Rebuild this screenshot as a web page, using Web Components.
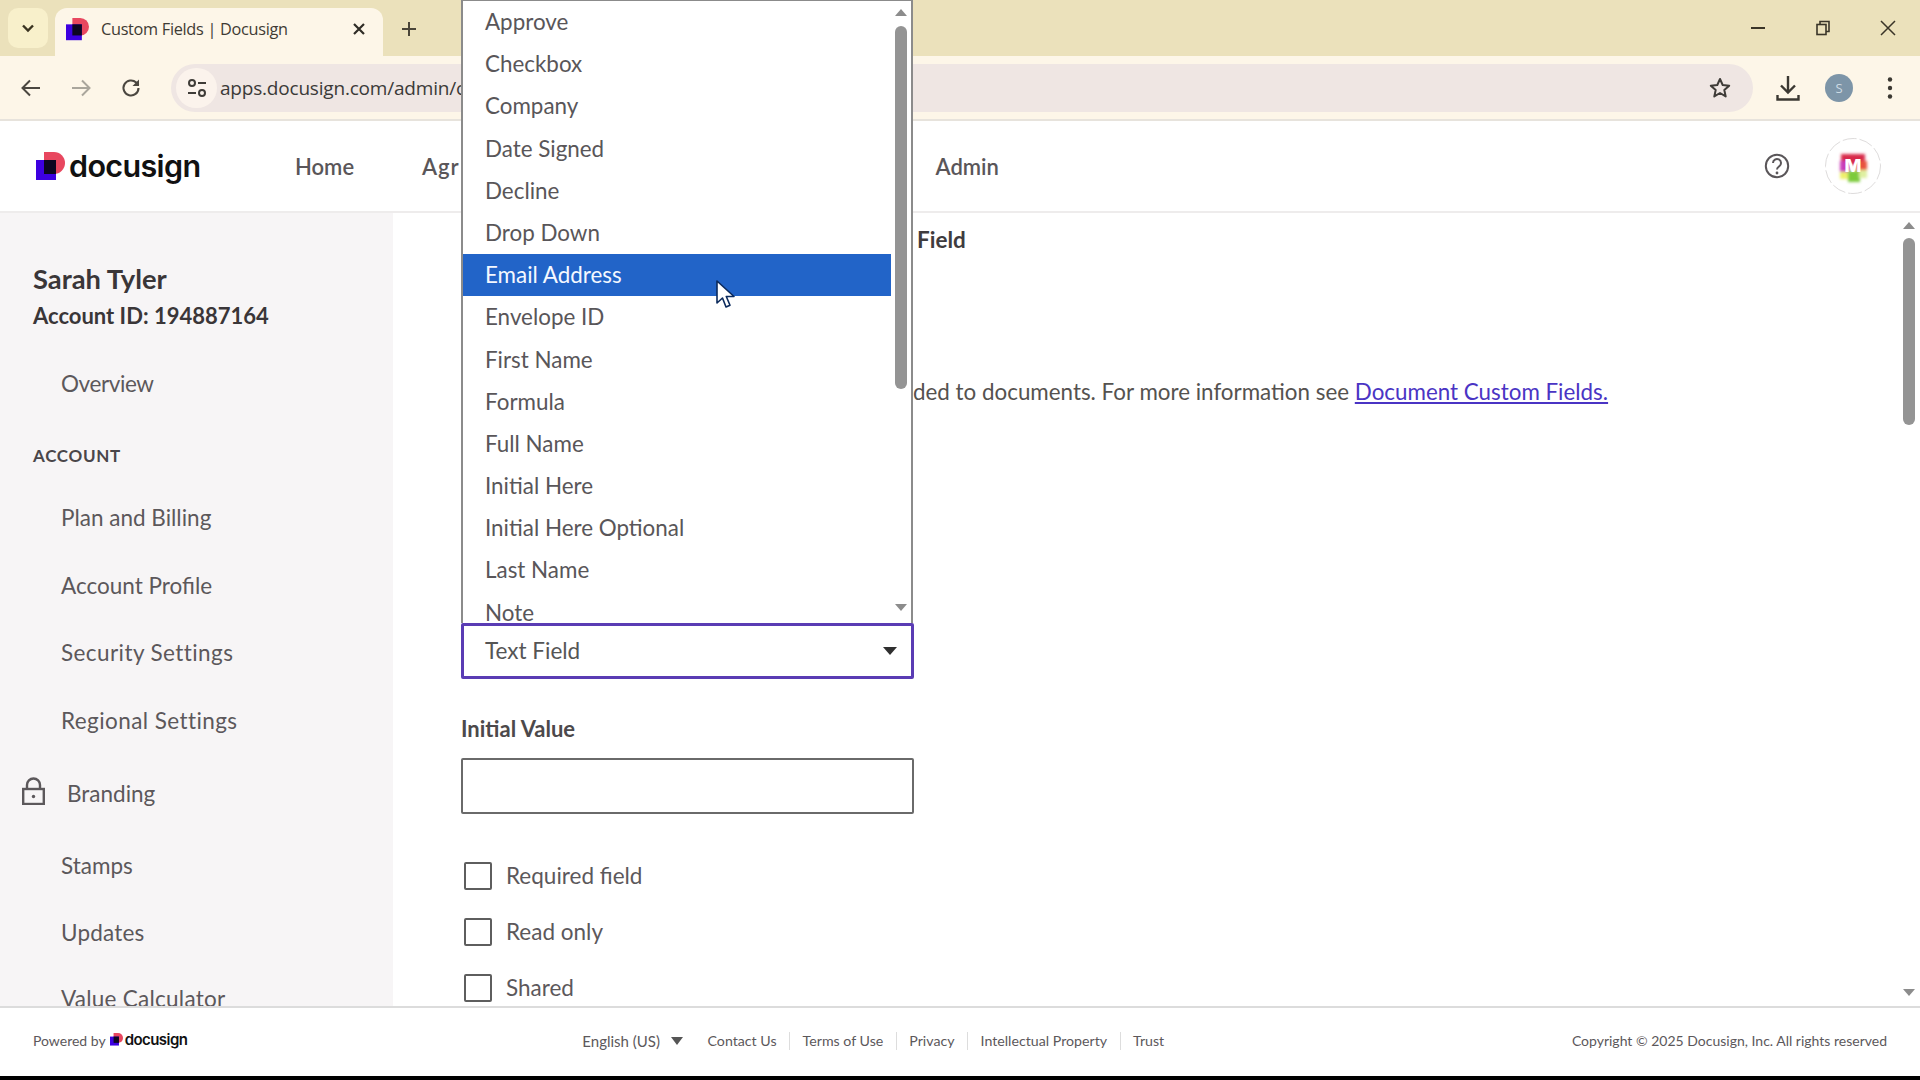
<!DOCTYPE html>
<html lang="en"><head><meta charset="utf-8"><title>Custom Fields | Docusign</title>
<style>
html,body{margin:0;padding:0;height:1080px;overflow:hidden;background:#000}
body{font-family:Lato,"Open Sans",sans-serif;color:#555}
</style></head><body>
<app-page></app-page>
<script>
const define=(name,css,html,setup)=>customElements.define(name,class extends HTMLElement{
  connectedCallback(){ if(this.shadowRoot) return;
    const r=this.attachShadow({mode:'open'});
    r.innerHTML='<style>'+css+'</style>'+(typeof html==='function'?html(this):html);
    if(setup) setup(r,this);
  }
});
const LOGO=(s)=>`<svg width="${s}" height="${s}" viewBox="0 0 29 29" style="display:block"><path d="M8 0h10a11 11 0 0 1 0 22H8z" fill="#e8475f"/><rect x="0" y="8" width="20" height="20" fill="#3d00e0"/><path d="M8 8h12v14H8z" fill="#0d0620"/></svg>`;

define('doc-logo',`:host{display:inline-flex;align-items:center;gap:var(--g,4px);font-family:Inter,Roboto,sans-serif;font-weight:600;color:#111;letter-spacing:-.04em;line-height:1}`,
 e=>LOGO(e.getAttribute('size')||29)+`<span style="font-size:${e.getAttribute('fs')||33}px">docusign</span>`);

define('tab-strip',`:host{display:flex;height:56px;background:#ebe1bb;align-items:flex-end;position:relative;flex:none}
 .btn{width:40px;height:40px;margin:0 7px 8px 8px;background:#f8f0cb;border-radius:10px;display:flex;align-items:center;justify-content:center}
 .tab{width:328px;height:48px;background:#fdf6e8;border-radius:12px 12px 0 0;display:flex;align-items:center;box-sizing:border-box;padding:0 0 6px 11px;font:16.300px "Open Sans",Roboto,sans-serif;color:#3f3b34;letter-spacing:-.3px}
 .tab .t{margin-left:12px;width:251px;white-space:nowrap}
 .plus{margin:0 0 6px 18px;height:42px;display:flex;align-items:center}
 .win{margin-left:auto;display:flex;height:56px;align-items:center;padding-right:24px;gap:49px}`,
 `<div class="btn"><svg width="16" height="16" viewBox="0 0 16 16"><path d="M3 5.500l5 5 5-5" fill="none" stroke="#3a3320" stroke-width="2.400"/></svg></div>
 <div class="tab"><svg width="23" height="23" viewBox="0 0 29 29"><path d="M8 0h10a11 11 0 0 1 0 22H8z" fill="#e8475f"/><rect x="0" y="8" width="20" height="20" fill="#3d00e0"/><path d="M8 8h12v14H8z" fill="#0d0620"/></svg>
 <span class="t">Custom Fields | Docusign</span>
 <svg width="14" height="14" viewBox="0 0 14 14"><path d="M2 2l10 10M12 2L2 12" stroke="#2f2c26" stroke-width="2.200"/></svg></div>
 <div class="plus"><svg width="16" height="16" viewBox="0 0 16 16"><path d="M8 1v14M1 8h14" stroke="#4a4538" stroke-width="2"/></svg></div>
 <div class="win">
 <svg width="16" height="16" viewBox="0 0 16 16"><path d="M1 8h14" stroke="#3a3528" stroke-width="2"/></svg>
 <svg width="16" height="16" viewBox="0 0 16 16"><rect x="2" y="4.500" width="9" height="10" fill="none" stroke="#3a3528" stroke-width="1.600"/><path d="M5 4V1.500h9v10h-3" fill="none" stroke="#3a3528" stroke-width="1.600"/></svg>
 <svg width="16" height="16" viewBox="0 0 16 16"><path d="M1 1l14 14M15 1L1 15" stroke="#3a3528" stroke-width="1.500"/></svg></div>`);

define('browser-bar',`:host{display:flex;height:65px;background:#fdf6e8;align-items:center;flex:none;box-sizing:border-box;border-bottom:2px solid #e7e3dc}
 .nav{display:flex;align-items:center;width:171px;box-sizing:border-box;padding-left:20px;gap:28px;flex:none}
 .addr{flex:none;width:1582px;height:48px;border-radius:24px;background:#efe6e3;display:flex;align-items:center;box-sizing:border-box;padding:0 21px 0 5px}
 .chip{width:41px;height:40px;border-radius:20px;background:#fbf3ec;display:flex;align-items:center;justify-content:center;margin-right:3px}
 .url{font:19px "Open Sans",Roboto,sans-serif;color:#3b3a38;letter-spacing:-.2px}
 .star{margin-left:auto}
 .tools{display:flex;align-items:center;margin-left:22px}
 .ava{width:28px;height:28px;border-radius:50%;background:#7d95a8;color:#cfdbe4;font:13px "Open Sans",sans-serif;display:flex;align-items:center;justify-content:center;margin:0 34px 0 24px}`,
 `<div class="nav">
 <svg width="22" height="22" viewBox="0 0 22 22"><path d="M20 11H3M10 3.500L2.500 11l7.500 7.500" fill="none" stroke="#4b4740" stroke-width="2"/></svg>
 <svg width="22" height="22" viewBox="0 0 22 22"><path d="M2 11h17M12 3.500l7.500 7.500-7.500 7.500" fill="none" stroke="#aaa69c" stroke-width="2"/></svg>
 <svg width="22" height="22" viewBox="0 0 22 22"><path d="M18.500 11a7.500 7.500 0 1 1-2.300-5.400L18.500 8" fill="none" stroke="#4b4740" stroke-width="2.100"/><path d="M19 2.500V9h-6.500z" fill="#4b4740"/></svg></div>
 <div class="addr"><span class="chip"><svg width="22" height="22" viewBox="0 0 22 22"><circle cx="6" cy="6" r="3" fill="none" stroke="#3f3c38" stroke-width="2"/><path d="M12 6h8M2 16h8" stroke="#3f3c38" stroke-width="2"/><circle cx="16" cy="16" r="3" fill="none" stroke="#3f3c38" stroke-width="2"/></svg></span>
 <span class="url">apps.docusign.com/admin/c</span>
 <svg class="star" width="24" height="24" viewBox="0 0 24 24"><path d="M12 3l2.700 6 6.500.7-4.900 4.300 1.400 6.400L12 17l-5.700 3.400L7.700 14 2.800 9.700 9.300 9z" fill="none" stroke="#3f3c38" stroke-width="2" stroke-linejoin="round"/></svg></div>
 <div class="tools">
 <svg width="26" height="28" viewBox="0 0 26 28"><path d="M13 2v16M6 11.500l7 7 7-7" fill="none" stroke="#3b3832" stroke-width="2.400"/><path d="M2.500 21v4.500h21V21" fill="none" stroke="#3b3832" stroke-width="2.400"/></svg>
 <span class="ava">S</span>
 <svg width="6" height="24" viewBox="0 0 6 24"><circle cx="3" cy="3.500" r="2.200" fill="#3b3832"/><circle cx="3" cy="12" r="2.200" fill="#3b3832"/><circle cx="3" cy="20.500" r="2.200" fill="#3b3832"/></svg></div>`);

define('app-header',`:host{display:flex;height:92px;background:#fff;align-items:center;flex:none;box-sizing:border-box;border-bottom:2px solid #eeecec;position:relative}
 doc-logo{margin-left:36px;width:259px;flex:none}
 a{font:600 22px Lato,sans-serif;color:#5a5659;text-decoration:none}
 .agr{margin-left:68px;letter-spacing:.9px}
 .adm{margin-left:476px}
 .help{margin-left:auto}
 .av{margin:0 38px 0 34px;width:58px;height:58px;display:block}`,
 `<doc-logo size="29" fs="30.500"></doc-logo><a>Home</a><a class="agr">Agr</a><a class="adm">Admin</a>
 <svg class="help" width="26" height="26" viewBox="0 0 26 26"><circle cx="13" cy="13" r="11.200" fill="none" stroke="#5a5659" stroke-width="2"/><path d="M9 10a4 4 0 1 1 6.200 3.300C13.800 14.300 13 15 13 16.500" fill="none" stroke="#5a5659" stroke-width="2"/><circle cx="13" cy="20" r="1.400" fill="#5a5659"/></svg>
 <svg class="av" viewBox="0 0 58 58"><defs><filter id="b" x="-30%" y="-30%" width="160%" height="160%"><feGaussianBlur stdDeviation="1.600"/></filter></defs>
 <circle cx="29" cy="29" r="27.500" fill="#fff" stroke="#dedcdc" stroke-width="1" stroke-dasharray="14 3"/>
 <g filter="url(#b)"><rect x="17" y="17" width="24" height="11" fill="#d82a4c"/><rect x="16" y="24" width="10" height="12" fill="#c93cb8"/><rect x="32" y="24" width="11" height="10" fill="#e8533c"/><rect x="16" y="35" width="10" height="7" fill="#eef06a"/><rect x="24" y="34" width="12" height="11" fill="#7ccb3a"/><rect x="35" y="33" width="8" height="8" fill="#dff0a0"/></g>
 <text x="29" y="35" text-anchor="middle" font-family="Inter,sans-serif" font-weight="800" font-size="18" fill="#fff">M</text></svg>`);

define('side-link',`:host{display:block;height:67.400px;padding-left:61px;font:400 22.500px/67.400px Lato,sans-serif;color:#5c585b;white-space:nowrap}`,`<slot></slot>`);

define('lock-link',`:host{display:flex;align-items:center;height:67.400px;padding-left:22px;font:400 22.500px Lato,sans-serif;color:#5c585b}
 svg{margin-right:22px;margin-top:-6px}`,
 `<svg width="23" height="28" viewBox="0 0 23 28"><path d="M5 12V8a6.500 6.500 0 0 1 13 0v4" fill="none" stroke="#5c585b" stroke-width="2.400"/><rect x="1.200" y="12" width="20.600" height="15" fill="none" stroke="#5c585b" stroke-width="2.400"/><circle cx="11.500" cy="19.500" r="1.700" fill="#5c585b"/></svg><slot></slot>`);

define('side-nav',`:host{display:block;width:393px;flex:none;background:#f7f5f6;overflow:hidden;box-sizing:border-box;padding-top:50px}
 .n{font:700 27.300px/32px Lato,sans-serif;color:#3a3638;padding-left:33px}
 .a{font:700 22px/30px Lato,sans-serif;color:#3a3638;padding-left:33px;margin:6px 0 18.500px}
 .h{font:700 17px/24px Lato,sans-serif;letter-spacing:.7px;color:#4a4649;padding-left:33px;margin:27.500px 0 16px}
 .mb{margin-top:6.300px}.ms{margin-top:4px}
 .wide{letter-spacing:.42px}.narrow{letter-spacing:-.4px}`,
 `<div class="n">Sarah Tyler</div><div class="a">Account ID: 194887164</div>
 <side-link class="narrow">Overview</side-link><div class="h">ACCOUNT</div>
 <side-link>Plan and Billing</side-link><side-link>Account Profile</side-link><side-link class="wide">Security Settings</side-link><side-link class="wide">Regional Settings</side-link>
 <lock-link class="mb">Branding</lock-link><side-link class="ms">Stamps</side-link><side-link style="letter-spacing:.2px">Updates</side-link><side-link style="margin-top:-1px;letter-spacing:.25px">Value Calculator</side-link>`);

define('check-row',`:host{display:flex;align-items:center;height:28px;margin:0 0 28px 3px;font:22.500px Lato,sans-serif;color:#5c585b;gap:14px}
 i{display:block;width:28px;height:28px;box-sizing:border-box;border:2.500px solid #5e5e5e;border-radius:2px;background:#fff}`,`<i></i><slot></slot>`);

define('type-select',`:host{display:flex;align-items:center;justify-content:space-between;width:453px;height:56px;box-sizing:border-box;border:3px solid #5a3cb4;border-radius:2px;padding:0 14px 2px 21px;font:22.500px Lato,sans-serif;color:#555;background:#fff}
 i{display:block;width:0;height:0;border:7px solid transparent;border-top:8px solid #2f2f2f;border-bottom:0;margin-top:2px}`,`<slot></slot><i></i>`);

define('field-form',`:host{display:block;flex:1;min-width:0;overflow:hidden;padding:12px 0 0 68px;background:#fff}
 .h{font:700 22.500px/30px Lato,sans-serif;color:#3f3c3e;padding-left:456px}
 .p{font:22.380px/30px Lato,sans-serif;color:#55524f;padding-left:452px;margin-top:122px;white-space:nowrap}
 .p a{color:#4a34c4;text-decoration:underline}
 .s{margin-top:216px}
 .l{font:700 22px/30px Lato,sans-serif;color:#4c494b;margin:35px 0 14px}
 .in{width:453px;height:56px;box-sizing:border-box;border:2px solid #6a6a6a;border-radius:2px;margin-bottom:47.500px}`,
 `<div class="h">Field</div><div class="p">ded to documents. For more information see <a>Document Custom Fields.</a></div>
 <type-select class="s">Text Field</type-select><div class="l">Initial Value</div><div class="in"></div>
 <check-row>Required field</check-row><check-row>Read only</check-row><check-row>Shared</check-row>`);

define('v-scroll',`:host{display:flex;flex-direction:column;align-items:center;width:var(--w,20px);flex:none;box-sizing:border-box;position:relative}
 .up,.dn{width:0;height:0;border:6.500px solid transparent;flex:none}
 .up{border-bottom:7px solid #8c8c8c;border-top:0;margin-top:var(--upt,9px)}
 .dn{border-top:7px solid #8c8c8c;border-bottom:0;margin-top:auto;margin-bottom:var(--dnb,10px)}
 .th{width:12px;border-radius:6px;background:#949494;height:var(--th,363px);margin-top:var(--tht,7px)}`,
 `<div class="up"></div><div class="th"></div><div class="dn"></div>`);

define('type-menu',`:host{position:absolute;left:461px;top:0;width:452px;height:623px;box-sizing:border-box;background:#fff;border:2px solid #8b8b8b;border-top-width:1px;border-bottom:0;display:flex;overflow:hidden;z-index:5}
 .list{flex:1;min-width:0;overflow:hidden}
 .o{display:block;height:42.200px;padding-left:22px;font:22.400px/42.200px Lato,sans-serif;color:#595659;white-space:nowrap}
 .o.sel{background:#2264c8;color:#f4f8ff}
 v-scroll{--w:20px;--upt:8px;--tht:10px;--th:363px;--dnb:12px}`,
 ()=>`<div class="list">${['Approve','Checkbox','Company','Date Signed','Decline','Drop Down','Email Address','Envelope ID','First Name','Formula','Full Name','Initial Here','Initial Here Optional','Last Name','Note'].map(t=>`<span class="o${t==='Email Address'?' sel':''}">${t}</span>`).join('')}</div><v-scroll></v-scroll>`);

define('app-footer',`:host{display:flex;align-items:center;height:70px;flex:none;box-sizing:border-box;background:#fff;border-top:2px solid #dcdcdc;padding:0 33px 3px;font:14px Lato,sans-serif;color:#5c585b;white-space:nowrap}
 doc-logo{margin-left:4px;--g:2px;margin-top:-2px}
 .c{margin-left:395px;display:flex;align-items:center;font-size:14.200px}
 .c span{padding:0 12.500px;border-right:1px solid #ddd;line-height:18px}
 .c span.l,.c span:last-child{border:0}
 .c span.l{padding:0 11px 0 0;font-size:15px}
 i{display:block;width:0;height:0;border:6.500px solid transparent;border-top:8px solid #555;border-bottom:0;margin-right:12px}
 .r{margin-left:auto}`,
 `Powered by<doc-logo size="13" fs="15"></doc-logo>
 <div class="c"><span class="l">English (US)</span><i></i><span>Contact Us</span><span>Terms of Use</span><span>Privacy</span><span>Intellectual Property</span><span>Trust</span></div>
 <div class="r">Copyright © 2025 Docusign, Inc. All rights reserved</div>`);

define('app-page',`:host{display:flex;flex-direction:column;height:1080px;width:1920px;position:relative;background:#000;overflow:hidden}
 .main{display:flex;height:793px;flex:none;background:#fff;overflow:hidden}
 v-scroll{--w:22px;--upt:9px;--tht:9px;--th:187px;--dnb:10px}
 .cur{position:absolute;left:716px;top:280px;z-index:6}`,
 `<tab-strip></tab-strip><browser-bar></browser-bar><app-header></app-header>
 <div class="main"><side-nav></side-nav><field-form></field-form><v-scroll></v-scroll></div>
 <app-footer></app-footer>
 <type-menu></type-menu>
 <svg class="cur" width="20" height="30" viewBox="0 0 20 30"><path d="M1 1v22l5.500-5 3.500 9 4-1.800-3.700-8.700H18z" fill="#fff" stroke="#0b2a5c" stroke-width="1.600" stroke-linejoin="round"/></svg>`);
</script>
</body></html>
